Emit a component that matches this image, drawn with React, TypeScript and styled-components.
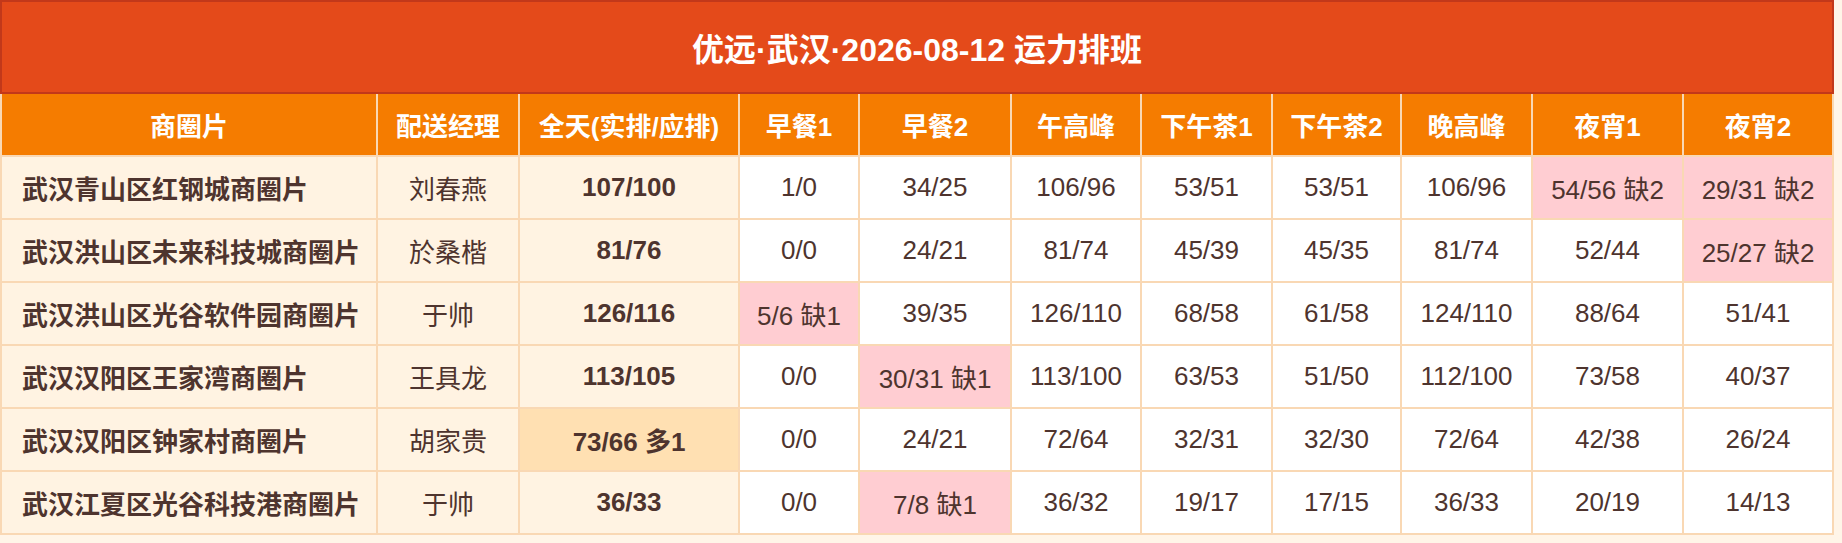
import React from 'react'
import styled, { createGlobalStyle } from 'styled-components'

type Row = {
  area: string
  manager: string
  total: string
  totalNote?: string
  slots: string[]
}

const SLOT_NAMES = ['早餐1', '早餐2', '午高峰', '下午茶1', '下午茶2', '晚高峰', '夜宵1', '夜宵2']

const ROWS: Row[] = [
  {
    area: '武汉青山区红钢城商圈片',
    manager: '刘春燕',
    total: '107/100',
    slots: ['1/0', '34/25', '106/96', '53/51', '53/51', '106/96', '54/56', '29/31'],
  },
  {
    area: '武汉洪山区未来科技城商圈片',
    manager: '於桑楷',
    total: '81/76',
    slots: ['0/0', '24/21', '81/74', '45/39', '45/35', '81/74', '52/44', '25/27'],
  },
  {
    area: '武汉洪山区光谷软件园商圈片',
    manager: '于帅',
    total: '126/116',
    slots: ['5/6', '39/35', '126/110', '68/58', '61/58', '124/110', '88/64', '51/41'],
  },
  {
    area: '武汉汉阳区王家湾商圈片',
    manager: '王具龙',
    total: '113/105',
    slots: ['0/0', '30/31', '113/100', '63/53', '51/50', '112/100', '73/58', '40/37'],
  },
  {
    area: '武汉汉阳区钟家村商圈片',
    manager: '胡家贵',
    total: '73/66',
    totalNote: '多1',
    slots: ['0/0', '24/21', '72/64', '32/31', '32/30', '72/64', '42/38', '26/24'],
  },
  {
    area: '武汉江夏区光谷科技港商圈片',
    manager: '于帅',
    total: '36/33',
    slots: ['0/0', '7/8', '36/32', '19/17', '17/15', '36/33', '20/19', '14/13'],
  },
]

// how many riders a slot is short, 0 when covered
function shortage(value: string) {
  const [actual, planned] = value.split('/').map(Number)
  return Math.max(planned - actual, 0)
}

const GlobalStyle = createGlobalStyle`
  html, body {
    margin: 0;
    padding: 0;
    background: #fff5e8;
  }
  body {
    font-family: "Liberation Sans", "Noto Sans CJK SC", sans-serif;
    color: #4e342e;
  }
`

const App = () => (
  <>
    <GlobalStyle />
    <Sheet>
      <Title>优远·武汉·2026-08-12 运力排班</Title>
      <Grid>
        <HeadCell>商圈片</HeadCell>
        <HeadCell>配送经理</HeadCell>
        <HeadCell>全天(实排/应排)</HeadCell>
        {SLOT_NAMES.map((name) => (
          <HeadCell key={name}>{name}</HeadCell>
        ))}
        {ROWS.map((row) => (
          <React.Fragment key={row.area}>
            <AreaCell>{row.area}</AreaCell>
            <InfoCell>{row.manager}</InfoCell>
            <InfoCell $bold $tone={row.totalNote ? 'over' : 'info'}>
              {row.totalNote ? `${row.total} ${row.totalNote}` : row.total}
            </InfoCell>
            {row.slots.map((value, i) => {
              const short = shortage(value)
              return (
                <SlotCell key={i} $tone={short > 0 ? 'short' : 'plain'}>
                  {short > 0 ? `${value} 缺${short}` : value}
                </SlotCell>
              )
            })}
          </React.Fragment>
        ))}
      </Grid>
    </Sheet>
  </>
)

type Tone = 'plain' | 'info' | 'short' | 'over'

const toneColors: Record<Tone, string> = {
  plain: '#ffffff',
  info: '#fff3e2',
  short: '#ffcdd2',
  over: '#ffe0b2',
}

const Sheet = styled.div`
  width: 1834px;
`

const Title = styled.div`
  height: 90px;
  display: flex;
  align-items: center;
  justify-content: center;
  background: #e44a1a;
  border: 2px solid #c2381a;
  color: #ffffff;
  font-size: 32px;
  font-weight: 700;
`

const Grid = styled.div`
  display: grid;
  grid-template-columns: 374px 140px 218px 118px 150px 128px 129px 127px 129px 149px 148px;
  grid-auto-rows: 61px;
  gap: 2px;
  padding: 0 2px 2px;
  background: #f9d8b4;
`

const HeadCell = styled.div`
  display: flex;
  align-items: center;
  justify-content: center;
  background: #f57c00;
  color: #ffffff;
  font-size: 26px;
  font-weight: 700;
`

const BodyCell = styled.div<{ $tone?: Tone; $bold?: boolean }>`
  display: flex;
  align-items: center;
  justify-content: center;
  font-size: 26px;
  font-weight: ${({ $bold }) => ($bold ? 700 : 400)};
  background: ${({ $tone = 'plain' }) => toneColors[$tone]};
  white-space: nowrap;
`

const AreaCell = styled(BodyCell).attrs({ $tone: 'info' as Tone, $bold: true })`
  justify-content: flex-start;
  padding-left: 20px;
`

const InfoCell = styled(BodyCell).attrs<{ $tone?: Tone }>((p) => ({ $tone: p.$tone ?? 'info' }))``

const SlotCell = styled(BodyCell)``

export default App
